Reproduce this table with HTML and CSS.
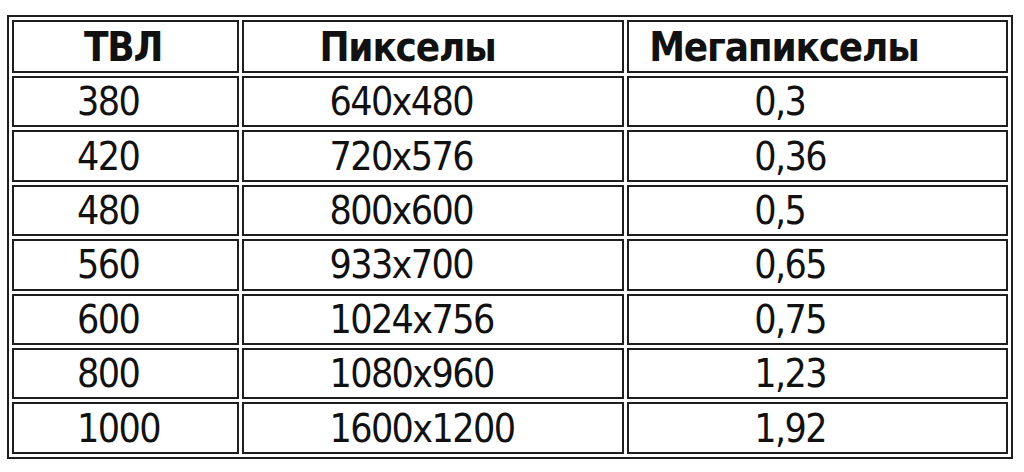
FILE: index.html
```html
<!DOCTYPE html>
<html lang="ru">
<head>
<meta charset="utf-8">
<title>ТВЛ</title>
<link rel="stylesheet" href="styles.css">
</head>
<body>
<table class="grid">
  <thead>
    <tr>
      <th class="c1">ТВЛ</th>
      <th class="c2">Пикселы</th>
      <th class="c3">Мегапикселы</th>
    </tr>
  </thead>
  <tbody>
    <tr><td class="c1">380</td><td class="c2">640x480</td><td class="c3">0,3</td></tr>
    <tr><td class="c1">420</td><td class="c2">720x576</td><td class="c3">0,36</td></tr>
    <tr><td class="c1">480</td><td class="c2">800x600</td><td class="c3">0,5</td></tr>
    <tr><td class="c1">560</td><td class="c2">933x700</td><td class="c3">0,65</td></tr>
    <tr><td class="c1">600</td><td class="c2">1024x756</td><td class="c3">0,75</td></tr>
    <tr><td class="c1">800</td><td class="c2">1080x960</td><td class="c3">1,23</td></tr>
    <tr><td class="c1">1000</td><td class="c2">1600x1200</td><td class="c3">1,92</td></tr>
  </tbody>
</table>
</body>
</html>
```
FILE: styles.css
```css
html, body {
  margin: 0;
  background: #ffffff;
}
body {
  padding: 15px 0 0 7px;
  font-family: "DejaVu Sans Condensed", "DejaVu Sans", sans-serif;
  font-stretch: condensed;
  color: #111;
}
.grid {
  border: 2px solid #1e1e1e;
  border-collapse: separate;
  border-spacing: 3px;
  width: 1006px;
  table-layout: fixed;
}
.grid th, .grid td {
  border: 2px solid #1e1e1e;
  box-sizing: border-box;
  text-align: left;
  vertical-align: middle;
  white-space: nowrap;
  padding: 0;
}
.grid th {
  height: 53px;
  font-weight: bold;
  font-size: 40px;
  letter-spacing: -1.2px;
}
.grid td {
  height: 51.4px;
  font-size: 39px;
  letter-spacing: -1.6px;
  font-weight: normal;
}
.grid .c1 { width: 227px; }
.grid .c2 { width: 381px; }
.grid .c3 { width: 380px; }
.grid th.c1 { padding-left: 70px; }
.grid th.c2 { padding-left: 75px; }
.grid th.c3 { padding-left: 20px; }
.grid td.c1 { padding-left: 63px; }
.grid td.c2 { padding-left: 85px; }
.grid td.c3 { padding-left: 125px; }
```
